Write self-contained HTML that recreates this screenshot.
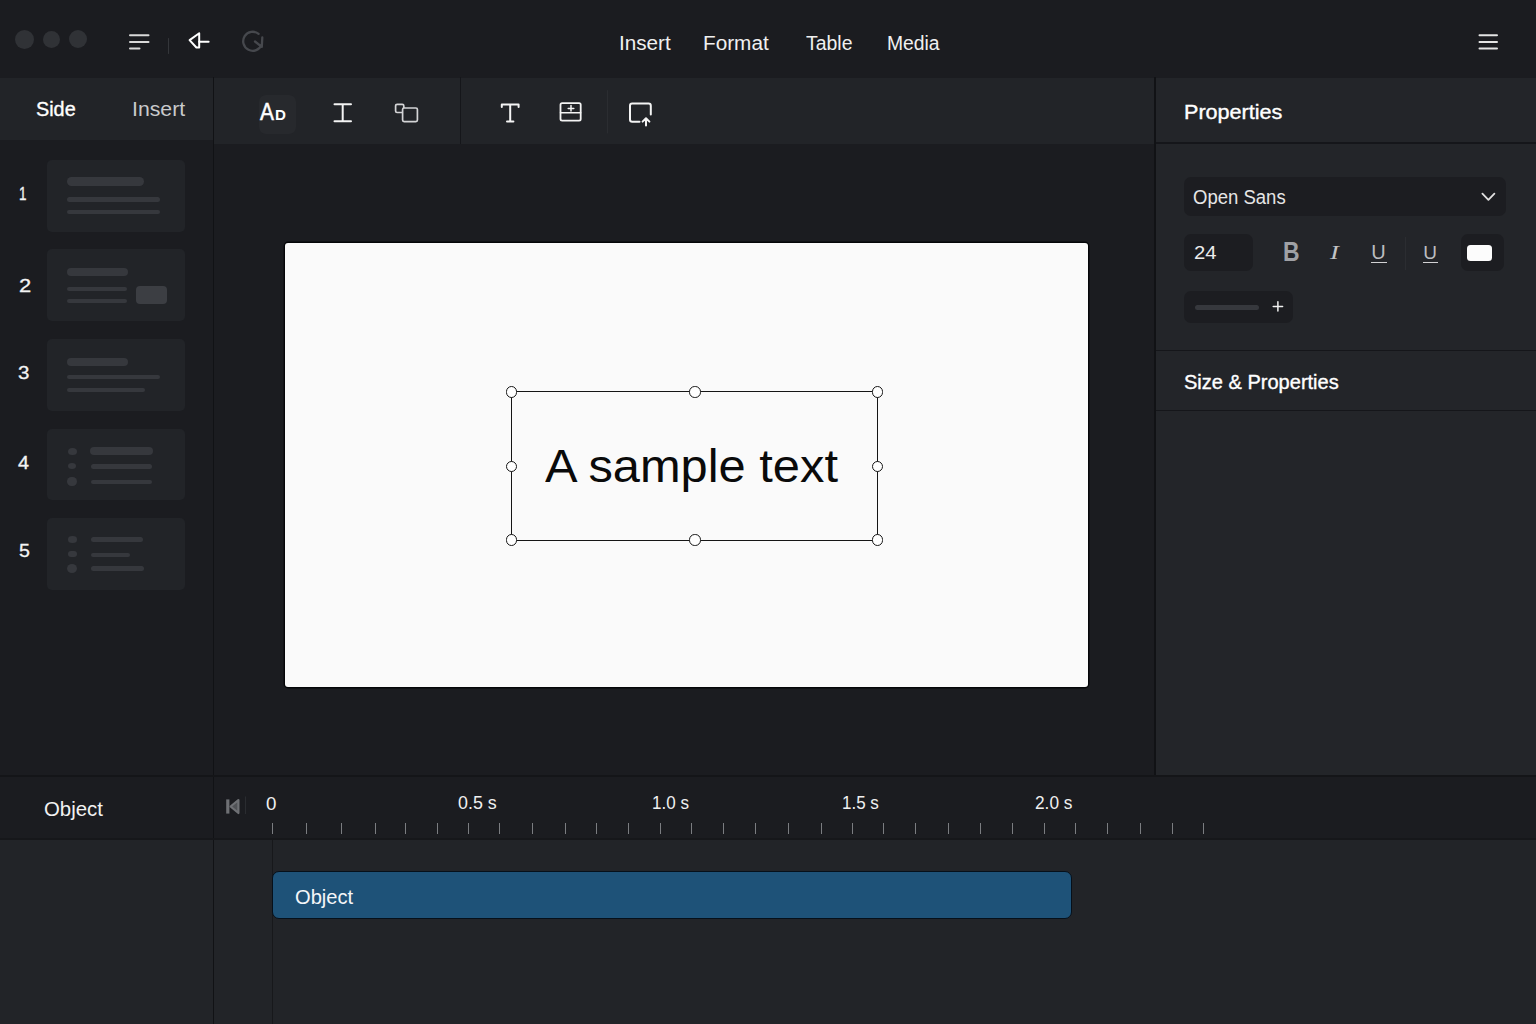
<!DOCTYPE html>
<html lang="en">
<head>
<meta charset="utf-8">
<title>Presentation Editor</title>
<style>
*{box-sizing:border-box;margin:0;padding:0}
html,body{width:1536px;height:1024px;overflow:hidden;background:#1b1c20}
body{position:relative;font-family:"Liberation Sans",sans-serif;color:#f2f2f2}
.abs{position:absolute}
.t{position:absolute;white-space:nowrap;line-height:1;color:#f0f0f0}
#topbar{left:0;top:0;width:1536px;height:77.5px;background:#1b1c20}
#sidetabs{left:0;top:77px;width:213px;height:63px;background:#222428}
#sidelist{left:0;top:140px;width:213px;height:635px;background:#1b1c20}
#toolbar{left:214px;top:77px;width:941px;height:66.7px;background:#222428}
#canvas{left:214px;top:143.7px;width:941px;height:631.3px;background:#1b1c20}
#right{left:1155px;top:77px;width:381px;height:698px;background:#232529}
#tlhead{left:0;top:776px;width:1536px;height:63px;background:#1b1c20}
#tltrack{left:0;top:839px;width:1536px;height:185px;background:#222428}
.vline{position:absolute;width:2px;background:#111215}
.hline{position:absolute;height:2px;background:#141518}
.dot{position:absolute;border-radius:50%;background:#303236}
.thumb{position:absolute;left:47px;width:138px;height:72px;border-radius:5px;background:#222428}
.bar{position:absolute;border-radius:5px;background:#36383d}
.num{position:absolute;font-size:18px;line-height:1;color:#f4f4f4;-webkit-text-stroke:0.3px #f4f4f4}
.box{position:absolute;background:#1c1d21;border-radius:7px}
.tick{position:absolute;top:823px;width:1px;height:11px;background:#7b7d81}
.h{position:absolute;width:11.4px;height:11.4px;border-radius:50%;background:#fff;border:1.7px solid #151515;margin:-0.2px 0 0 -0.2px}
svg{position:absolute;overflow:visible}
</style>
</head>
<body>
<!-- regions -->
<div id="sidetabs" class="abs"></div>
<div id="sidelist" class="abs"></div>
<div id="toolbar" class="abs"></div>
<div id="canvas" class="abs"></div>
<div id="right" class="abs"></div>
<div id="tlhead" class="abs"></div>
<div id="tltrack" class="abs"></div>
<div id="topbar" class="abs"></div>

<!-- structural dividers -->
<div class="vline" style="left:212.9px;top:77px;height:947px;width:1.4px"></div>
<div class="vline" style="left:1154.3px;top:77px;height:698px;width:1.3px"></div>
<div class="vline" style="left:459.5px;top:77px;height:66.7px;width:1.5px;background:#15161a"></div>
<div class="hline" style="left:0;top:774.5px;width:1536px"></div>
<div class="hline" style="left:0;top:838px;width:1536px;height:1.5px;background:#16171a"></div>
<div class="hline" style="left:1156px;top:142px;width:380px;height:1.5px;background:#15161a"></div>
<div class="hline" style="left:1156px;top:349.5px;width:380px;height:1.5px;background:#15161a"></div>
<div class="hline" style="left:1156px;top:409.5px;width:380px;height:1.5px;background:#15161a"></div>

<!-- TOPBAR -->
<div class="dot" style="left:14.5px;top:30px;width:19px;height:19px"></div>
<div class="dot" style="left:43px;top:30.5px;width:17px;height:17px"></div>
<div class="dot" style="left:69px;top:30px;width:18px;height:18px"></div>
<svg style="left:0;top:0" width="320" height="77" viewBox="0 0 320 77" fill="none" stroke-linecap="round" stroke-linejoin="round">
  <g stroke="#d9d9d9" stroke-width="2">
    <path d="M130 35.3H148.5M130 42H148.5M130 48.6H139.5"/>
  </g>
  <path d="M168.5 38.5V53.5" stroke="#34363a" stroke-width="1"/>
  <g stroke="#ffffff" stroke-width="2">
    <path d="M199.2 33.2L189.6 40.1L196.4 47.5H199.2Z"/>
    <path d="M199.2 41.8H208.6"/>
  </g>
  <g stroke="#46484d" stroke-width="2.3">
    <path d="M261.6 44.6A9.5 9.5 0 1 1 258.6 33.8"/>
    <path d="M255 41.5L261.8 46.8L262.3 37.5"/>
  </g>
</svg>
<div class="t" id="m1" style="left:618.8px;top:34.3px;font-size:19.5px;transform-origin:0 50%;transform:scaleX(1.060)">Insert</div>
<div class="t" id="m2" style="left:702.8px;top:34.3px;font-size:19.5px;transform-origin:0 50%;transform:scaleX(1.064)">Format</div>
<div class="t" id="m3" style="left:806.2px;top:34.3px;font-size:19.5px;transform-origin:0 50%;transform:scaleX(0.996)">Table</div>
<div class="t" id="m4" style="left:886.8px;top:34.3px;font-size:19.5px;transform-origin:0 50%;transform:scaleX(0.990)">Media</div>
<svg style="left:1470px;top:25px" width="40" height="34" viewBox="1470 25 40 34" fill="none" stroke="#e4e4e4" stroke-width="2" stroke-linecap="round">
  <path d="M1479.5 35.2H1497M1479.5 42H1497M1479.5 48.6H1497"/>
</svg>

<!-- SIDE TABS -->
<div class="t" id="s1" style="left:36.3px;top:99.5px;font-size:19.5px;color:#fff;-webkit-text-stroke:0.35px #fff;transform-origin:0 50%;transform:scaleX(1.016)">Side</div>
<div class="t" id="s2" style="left:131.8px;top:99.5px;font-size:19.5px;color:#c9cacc;transform-origin:0 50%;transform:scaleX(1.090)">Insert</div>


<!-- TOOLBAR -->
<div class="abs" style="left:258.5px;top:94.5px;width:37px;height:39px;border-radius:7px;background:#27292d"></div>
<div class="t" id="abA" style="left:260.3px;top:100.7px;font-size:23px;color:#fff;-webkit-text-stroke:0.5px #fff;transform-origin:0 50%;transform:scaleX(0.907)">A</div>
<div class="t" id="abD" style="left:275.0px;top:107.5px;font-size:14px;color:#fff;font-weight:bold;transform-origin:0 50%;transform:scaleX(1.080)">D</div>
<svg style="left:214px;top:77px" width="500" height="66" viewBox="214 77 500 66" fill="none" stroke-linecap="round" stroke-linejoin="round">
  <g stroke="#f4f4f4" stroke-width="2">
    <path d="M334.5 104.2H351M342.7 104.2V121.3M334.5 121.3H351"/>
  </g>
  <g stroke="#d4d4d6" stroke-width="1.7">
    <rect x="395.6" y="104.3" width="8.2" height="8.2" rx="1.5"/>
    <rect x="402.6" y="108" width="14.8" height="13.6" rx="1.5" fill="#222428"/>
  </g>
  <g stroke="#f4f4f4" stroke-width="2">
    <path d="M501.8 107V104.6H518.6V107M510.2 104.6V121.4M507 121.4H513.4"/>
  </g>
  <g stroke="#f4f4f4" stroke-width="1.8">
    <rect x="560.5" y="103.2" width="20.2" height="17.4" rx="1.6"/>
    <path d="M560.5 112.8H580.7M571 105.6V111M568.2 108.4H573.8" stroke-width="1.5"/>
  </g>
  <path d="M607.5 90.5V133" stroke="#2b2d31" stroke-width="1"/>
  <g stroke="#f4f4f4" stroke-width="2">
    <path d="M639.5 121.8H632.2Q630 121.8 630 119.6V105.8Q630 103.6 632.2 103.6H648.6Q650.8 103.6 650.8 105.8V114.5"/>
    <path d="M646 125.5V118.6M642.6 121.6L646 118.2L649.4 121.6"/>
  </g>
</svg>

<!-- SLIDE LIST -->
<div class="num" id="n1" style="left:19.0px;top:185.0px;transform-origin:0 50%;transform:scaleX(0.750)">1</div>
<div class="num" id="n2" style="left:18.5px;top:277.0px;transform-origin:0 50%;transform:scaleX(1.220)">2</div>
<div class="num" id="n3" style="left:18.0px;top:364.0px;transform-origin:0 50%;transform:scaleX(1.140)">3</div>
<div class="num" id="n4" style="left:18.0px;top:454.0px;transform-origin:0 50%;transform:scaleX(1.100)">4</div>
<div class="num" id="n5" style="left:18.5px;top:542.0px;transform-origin:0 50%;transform:scaleX(1.090)">5</div>

<div class="thumb" style="top:160px"></div>
<div class="bar" style="left:66.5px;top:177px;width:77.5px;height:9px"></div>
<div class="bar" style="left:66.5px;top:197px;width:93.5px;height:4.6px"></div>
<div class="bar" style="left:66.5px;top:209.6px;width:93.5px;height:4.6px"></div>

<div class="thumb" style="top:249.3px"></div>
<div class="bar" style="left:66.5px;top:267.8px;width:61.5px;height:8.4px"></div>
<div class="bar" style="left:66.5px;top:286.5px;width:60.5px;height:4.7px"></div>
<div class="bar" style="left:66.5px;top:298.5px;width:60.5px;height:4.6px"></div>
<div class="bar" style="left:135.8px;top:286px;width:31.2px;height:17.6px;border-radius:4px;background:#3c3e43"></div>

<div class="thumb" style="top:338.8px"></div>
<div class="bar" style="left:66.5px;top:357.5px;width:61px;height:8.7px"></div>
<div class="bar" style="left:66.5px;top:374.7px;width:93.5px;height:4.7px"></div>
<div class="bar" style="left:66.5px;top:387.7px;width:78px;height:4.5px"></div>

<div class="thumb" style="top:428.7px;height:71.2px"></div>
<div class="bar" style="left:67.5px;top:448px;width:9px;height:7px;border-radius:50%"></div>
<div class="bar" style="left:68px;top:463px;width:8px;height:6px;border-radius:50%"></div>
<div class="bar" style="left:67.2px;top:476.5px;width:9.6px;height:9.6px;border-radius:50%"></div>
<div class="bar" style="left:90px;top:447.4px;width:62.7px;height:7.8px"></div>
<div class="bar" style="left:90.5px;top:463.8px;width:61.5px;height:5px"></div>
<div class="bar" style="left:90.5px;top:479.5px;width:61.5px;height:4.7px"></div>

<div class="thumb" style="top:517.6px"></div>
<div class="bar" style="left:67.6px;top:536.4px;width:9.6px;height:7px;border-radius:50%"></div>
<div class="bar" style="left:67.8px;top:551.4px;width:9.2px;height:5.6px;border-radius:3px"></div>
<div class="bar" style="left:67.4px;top:564.1px;width:10px;height:9px;border-radius:50%"></div>
<div class="bar" style="left:90.5px;top:537.1px;width:52.4px;height:5px"></div>
<div class="bar" style="left:90.5px;top:552.5px;width:39px;height:4.5px"></div>
<div class="bar" style="left:90.5px;top:566.2px;width:53.8px;height:4.4px"></div>

<!-- CANVAS -->
<div class="abs" style="left:285px;top:242.7px;width:802.8px;height:444px;background:#fafafa;border-radius:3px;box-shadow:0 0 0 1.4px #050608"></div>
<div class="abs" style="left:510.6px;top:391.3px;width:367.8px;height:149.6px;border:1.6px solid #151515"></div>
<div class="h" style="left:505.9px;top:386.4px"></div>
<div class="h" style="left:689.6px;top:386.4px"></div>
<div class="h" style="left:872.2px;top:386.4px"></div>
<div class="h" style="left:505.9px;top:460.8px"></div>
<div class="h" style="left:872.2px;top:460.8px"></div>
<div class="h" style="left:505.9px;top:534.6px"></div>
<div class="h" style="left:689.6px;top:534.6px"></div>
<div class="h" style="left:872.2px;top:534.6px"></div>
<div class="t" id="sample" style="left:545.1px;top:442.7px;font-size:46px;color:#0a0a0a;transform-origin:0 50%;transform:scaleX(1.061)">A sample text</div>


<!-- RIGHT PANEL -->
<div class="t" id="props" style="left:1183.5px;top:103.1px;font-size:19.5px;color:#fff;-webkit-text-stroke:0.35px #fff;transform-origin:0 50%;transform:scaleX(1.107)">Properties</div>
<div class="box" style="left:1184.3px;top:176.8px;width:321.7px;height:39.4px"></div>
<div class="t" id="osans" style="left:1193.1px;top:187.6px;font-size:19.5px;color:#e6e6e6;transform-origin:0 50%;transform:scaleX(0.950)">Open Sans</div>
<svg style="left:1478px;top:188px" width="22" height="18" viewBox="1478 188 22 18" fill="none" stroke="#e0e0e0" stroke-width="1.8" stroke-linecap="round" stroke-linejoin="round">
  <path d="M1482.4 193.6L1488.4 199.8L1494.4 193.6"/>
</svg>
<div class="box" style="left:1184.3px;top:234.2px;width:68.7px;height:37.2px"></div>
<div class="t" id="n24" style="left:1193.7px;top:243.0px;font-size:19px;color:#ececec;transform-origin:0 50%;transform:scaleX(1.065)">24</div>
<div class="t" id="bB" style="left:1283.1px;top:238.8px;font-size:27px;font-weight:bold;color:#9fa1a5;transform-origin:0 50%;transform:scaleX(0.850)">B</div>
<div class="t" id="bI" style="left:1329.9px;top:243.4px;font-size:19px;font-style:italic;font-family:'Liberation Serif','DejaVu Serif',serif;color:#c2c3c5;transform-origin:0 50%;transform:scaleX(1.400)">I</div>
<div class="t" id="bU1" style="left:1371.2px;top:241.8px;font-size:20px;color:#bcbdc0">U</div>
<div class="abs" style="left:1370.8px;top:261.6px;width:16.2px;height:1.3px;background:#d2d2d4"></div>
<div class="abs" style="left:1405px;top:237px;width:1px;height:33px;background:#2b2d31"></div>
<div class="t" id="bU2" style="left:1423.2px;top:242.6px;font-size:19px;color:#bcbdc0">U</div>
<div class="abs" style="left:1423px;top:261.6px;width:15.2px;height:1.3px;background:#d2d2d4"></div>
<div class="box" style="left:1461px;top:234.2px;width:42.5px;height:36.8px"></div>
<div class="abs" style="left:1467px;top:244.6px;width:25px;height:16.4px;border-radius:3.5px;background:#fcfcfc"></div>
<div class="box" style="left:1184.3px;top:291px;width:108.3px;height:32.2px"></div>
<div class="abs" style="left:1194.7px;top:304.9px;width:64.7px;height:5px;border-radius:2.5px;background:#36383d"></div>
<svg style="left:1270px;top:298px" width="16" height="16" viewBox="1270 298 16 16" fill="none" stroke="#f0f0f0" stroke-width="1.5" stroke-linecap="round">
  <path d="M1273.2 306.4H1282.6M1277.9 301.7V311.1"/>
</svg>
<div class="t" id="sizep" style="left:1183.7px;top:373.3px;font-size:19.5px;color:#fff;-webkit-text-stroke:0.35px #fff;transform-origin:0 50%;transform:scaleX(1.027)">Size &amp; Properties</div>

<!-- TIMELINE -->
<div class="t" id="obj1" style="left:44.3px;top:799.8px;font-size:19.5px;color:#f2f2f2;transform-origin:0 50%;transform:scaleX(1.046)">Object</div>
<svg style="left:222px;top:795px" width="30" height="24" viewBox="222 795 30 24" fill="none">
  <path d="M227.8 799.4V813.6" stroke="#6e7074" stroke-width="3.2"/>
  <path d="M238.4 800L230.6 806.5L238.4 813Z" stroke="#6e7074" stroke-width="2.2" stroke-linejoin="round" fill="#505256"/>
  <path d="M245.5 796.5V814" stroke="#2a2c30" stroke-width="1"/>
</svg>
<div class="t" id="tl0" style="left:265.8px;top:795.6px;font-size:17.5px;transform-origin:0 50%;transform:scaleX(1.070)">0</div>
<div class="t" id="tl1" style="left:458.1px;top:795.0px;font-size:17.5px;transform-origin:0 50%;transform:scaleX(1.020)">0.5 s</div>
<div class="t" id="tl2" style="left:652.2px;top:795.0px;font-size:17.5px;transform-origin:0 50%;transform:scaleX(0.973)">1.0 s</div>
<div class="t" id="tl3" style="left:842.2px;top:795.0px;font-size:17.5px;transform-origin:0 50%;transform:scaleX(0.972)">1.5 s</div>
<div class="t" id="tl4" style="left:1035.0px;top:795.0px;font-size:17.5px;transform-origin:0 50%;transform:scaleX(0.986)">2.0 s</div>
<div class="tick" style="left:272px"></div>
<div class="tick" style="left:306px"></div>
<div class="tick" style="left:341px"></div>
<div class="tick" style="left:375px"></div>
<div class="tick" style="left:405px"></div>
<div class="tick" style="left:437px"></div>
<div class="tick" style="left:468px"></div>
<div class="tick" style="left:499px"></div>
<div class="tick" style="left:532px"></div>
<div class="tick" style="left:565px"></div>
<div class="tick" style="left:596px"></div>
<div class="tick" style="left:628px"></div>
<div class="tick" style="left:660px"></div>
<div class="tick" style="left:691px"></div>
<div class="tick" style="left:723px"></div>
<div class="tick" style="left:755px"></div>
<div class="tick" style="left:788px"></div>
<div class="tick" style="left:821px"></div>
<div class="tick" style="left:852px"></div>
<div class="tick" style="left:883px"></div>
<div class="tick" style="left:915px"></div>
<div class="tick" style="left:948px"></div>
<div class="tick" style="left:980px"></div>
<div class="tick" style="left:1012px"></div>
<div class="tick" style="left:1044px"></div>
<div class="tick" style="left:1075px"></div>
<div class="tick" style="left:1107px"></div>
<div class="tick" style="left:1140px"></div>
<div class="tick" style="left:1172px"></div>
<div class="tick" style="left:1203px"></div>
<div class="abs" style="left:271.8px;top:840px;width:1.4px;height:184px;background:#17181b"></div>
<div class="abs" style="left:271.8px;top:871.3px;width:799.8px;height:47.4px;border-radius:7px;background:#1e5278;border:1.5px solid #06101a"></div>
<div class="t" id="obj2" style="left:295.4px;top:887.5px;font-size:19.5px;color:#f4f6f8;transform-origin:0 50%;transform:scaleX(1.032)">Object</div>

</body>
</html>
